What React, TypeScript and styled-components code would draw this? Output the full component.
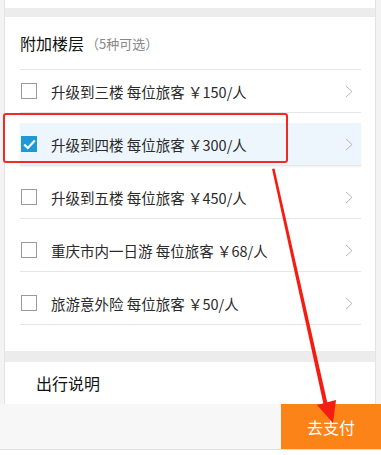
import styled, { createGlobalStyle } from "styled-components";

const GlobalStyle = createGlobalStyle`
  html, body {
    margin: 0;
    padding: 0;
    background: #f3f3f3;
  }
  body {
    font-family: "Noto Sans CJK SC", "Noto Sans", sans-serif;
  }
`;

const options = [
  { label: "升级到三楼", price: "￥150/人", checked: false },
  { label: "升级到四楼", price: "￥300/人", checked: true },
  { label: "升级到五楼", price: "￥450/人", checked: false },
  { label: "重庆市内一日游", price: "￥68/人", checked: false },
  { label: "旅游意外险", price: "￥50/人", checked: false },
];

const App = () => {
  return (
    <Page>
      <GlobalStyle />
      <Card>
        <TopStub />
        <Band />
        <Section>
          <Title>
            附加楼层<Hint>（5种可选）</Hint>
          </Title>
          <List>
            {options.map((o) => (
              <Row key={o.label} $active={o.checked}>
                <Box $checked={o.checked}>
                  {o.checked ? (
                    <svg width="13" height="11" viewBox="0 0 13 11">
                      <path
                        d="M1.2 5.6 L4.8 9 L11.8 1.6"
                        fill="none"
                        stroke="#fff"
                        strokeWidth="2.2"
                      />
                    </svg>
                  ) : null}
                </Box>
                <Label>
                  {o.label} 每位旅客 {o.price}
                </Label>
                <Chevron viewBox="0 0 8 13">
                  <path d="M1 1 L7 6.5 L1 12" fill="none" stroke="#b5b5b5" strokeWidth="1" />
                </Chevron>
              </Row>
            ))}
          </List>
        </Section>
        <Band $tall />
        <Notes>出行说明</Notes>
      </Card>
      <Footer>
        <PayButton>去支付</PayButton>
      </Footer>
      <BottomStrip />

      <Highlight />
      <Arrow width="381" height="455" viewBox="0 0 381 455">
        <polygon points="272,169 274.5,168.5 329,410 325,411" fill="#f41d12" />
        <polygon points="317,405 336,400 333,423" fill="#f41d12" />
      </Arrow>
    </Page>
  );
};

export default App;

const Page = styled.div`
  position: relative;
  width: 381px;
  height: 455px;
  overflow: hidden;
  background: #f3f3f3;
`;

const Card = styled.div`
  margin: 0 5px 0 4px;
  background: #fff;
  border-left: 1px solid #e3e3e3;
  border-right: 1px solid #e3e3e3;
`;

const TopStub = styled.div`
  height: 8px;
`;

const Band: any = styled.div`
  height: ${(p: { $tall?: boolean }) => (p.$tall ? "11px" : "9px")};
  background: #ececec;
`;

const Section = styled.div`
  padding: 0 14px 16px 15px;
`;

const Title = styled.div`
  height: 52px;
  display: flex;
  align-items: center;
  font-size: 16px;
  color: #111;
  border-bottom: 1px solid #e6e6e6;
`;

const Hint = styled.span`
  font-size: 13px;
  color: #888;
  margin-left: 2px;
`;

const List = styled.div`
  display: flex;
  flex-direction: column;
`;

const Row: any = styled.div`
  height: 42px;
  display: flex;
  align-items: center;
  padding: 0 8px 0 1px;
  margin-bottom: 10px;
  border-bottom: 1px solid #e6e6e6;
  background: ${(p: { $active?: boolean }) => (p.$active ? "#eef6fd" : "#fff")};
  box-shadow: ${(p: { $active?: boolean }) =>
    p.$active ? "0 1px 2px rgba(0,0,0,0.06)" : "none"};
`;

const Box: any = styled.div`
  width: 16px;
  height: 16px;
  box-sizing: border-box;
  border: ${(p: { $checked?: boolean }) => (p.$checked ? "none" : "1px solid #9a9a9a")};
  background: ${(p: { $checked?: boolean }) => (p.$checked ? "#1d9ad6" : "#fff")};
  display: flex;
  align-items: center;
  justify-content: center;
  flex-shrink: 0;
`;

const Label = styled.span`
  margin-left: 14px;
  font-size: 14.5px;
  color: #2a2a2a;
  flex: 1;
  white-space: pre;
`;

const Chevron = styled.svg`
  width: 8px;
  height: 13px;
`;

const Notes = styled.div`
  height: 42px;
  display: flex;
  align-items: center;
  padding-left: 31px;
  font-size: 16px;
  color: #111;
`;

const Footer = styled.div`
  height: 45px;
  display: flex;
  justify-content: flex-end;
  background: #f6f7f6;
`;

const PayButton = styled.div`
  width: 100px;
  display: flex;
  align-items: center;
  justify-content: center;
  background: #fb8317;
  color: #fff;
  font-size: 16px;
`;

const BottomStrip = styled.div`
  height: 7px;
  border-top: 1px solid #e0e0e0;
  background: #fff;
`;

const Highlight = styled.div`
  position: absolute;
  left: 3px;
  top: 113px;
  width: 285px;
  height: 50px;
  box-sizing: border-box;
  border: 2.5px solid #f42a22;
  border-radius: 3px;
`;

const Arrow = styled.svg`
  position: absolute;
  left: 0;
  top: 0;
  pointer-events: none;
`;
